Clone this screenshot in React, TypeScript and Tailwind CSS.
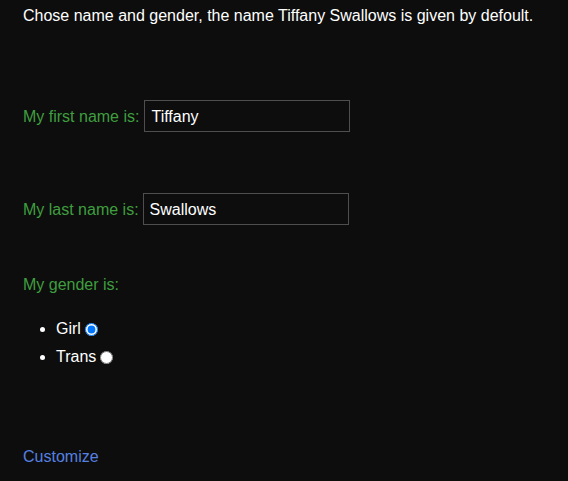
import React, { useState } from 'react';

export default function App() {
    const [first, setFirst] = useState('Tiffany');
    const [last, setLast] = useState('Swallows');
    const [gender, setGender] = useState('girl');

    return (
        <div className="min-h-[481px] bg-[#0d0d0d] text-white px-[23px] pt-[4px] font-['Liberation_Sans',Arial,sans-serif] text-[16px] leading-6">
            <p>Chose name and gender, the name Tiffany Swallows is given by defoult.</p>

            <div className="mt-[72px] flex items-center gap-[5px] h-[32px]">
                <span className="text-[#3f9e3f] pt-[1px]">My first name is:</span>
                <input
                    value={first}
                    onChange={(e) => setFirst(e.target.value)}
                    className="w-[206px] h-[32px] border border-[#4e4e4e] bg-transparent pl-[6px] pt-[1px] text-white outline-none"
                />
            </div>

            <div className="mt-[61px] flex items-center gap-[4px] h-[32px]">
                <span className="text-[#3f9e3f] pt-[1px]">My last name is:</span>
                <input
                    value={last}
                    onChange={(e) => setLast(e.target.value)}
                    className="w-[206px] h-[32px] border border-[#4e4e4e] bg-transparent pl-[6px] pt-[1px] text-white outline-none"
                />
            </div>

            <p className="mt-[48px] text-[#3f9e3f]">My gender is:</p>

            <ul className="mt-[18px] list-disc pl-[33px]">
                <li className="leading-[28px]">
                    Girl
                    <input
                        type="radio"
                        name="gender"
                        checked={gender === 'girl'}
                        onChange={() => setGender('girl')}
                        className="ml-[4px] w-[13px] h-[13px] align-[-2px]"
                    />
                </li>
                <li className="leading-[28px]">
                    Trans
                    <input
                        type="radio"
                        name="gender"
                        checked={gender === 'trans'}
                        onChange={() => setGender('trans')}
                        className="ml-[4px] w-[13px] h-[13px] align-[-2px]"
                    />
                </li>
            </ul>

            <div className="mt-[74px]">
                <a href="#" className="text-[#5580e0]">Customize</a>
            </div>
        </div>
    );
}
